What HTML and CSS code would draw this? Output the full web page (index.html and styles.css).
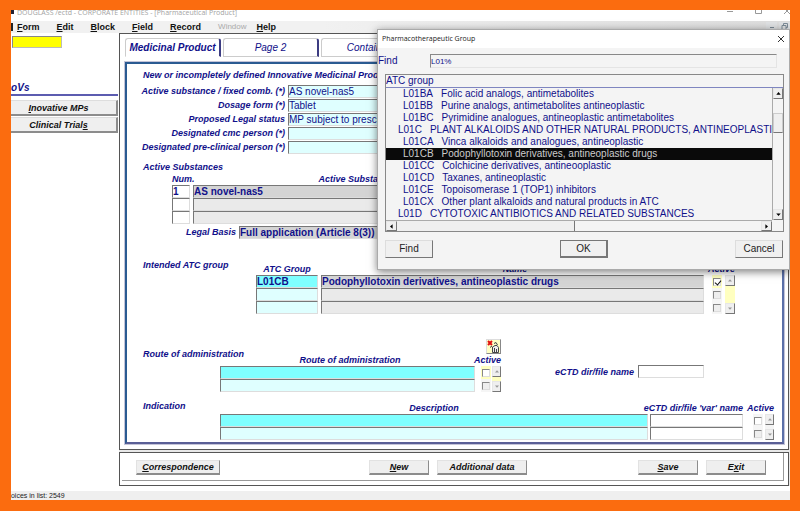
FILE: index.html
```html
<!DOCTYPE html>
<html lang="en">
<head>
  <meta charset="UTF-8">
  <meta name="viewport" content="width=device-width, initial-scale=1.0">
  <title>Pharmaceutical Product</title>
  <link rel="stylesheet" href="styles.css">
</head>
<body>
  <!-- Shared icons -->
  <svg class="sprite" width="0" height="0">
    <symbol id="up" viewBox="0 0 6 4"><path d="M3 0 6 3.5H0Z"/></symbol>
    <symbol id="down" viewBox="0 0 6 4"><path d="M0 .5H6L3 4Z"/></symbol>
    <symbol id="left" viewBox="0 0 4 6"><path d="M0 3 3.5 0V6Z"/></symbol>
    <symbol id="right" viewBox="0 0 4 6"><path d="M.5 0 4 3 .5 6Z"/></symbol>
  </svg>

  <div class="window">
    <header class="title-bar">
      <span class="app-icon"></span>
      <span class="title-text">DOUGLASS /ectd - CORPORATE ENTITIES - [Pharmaceutical Product]</span>
      <svg class="window-controls" width="66" height="11" viewBox="0 0 66 11" fill="none" stroke="#999"><path d="M3 1.5H9M31.500 -3V3.500H37.500V-3M60 4 66-2M60-2 66 4"/></svg>
    </header>

    <nav class="menu-bar">
      <span class="menu-icon"></span>
      <a href="#"><u>F</u>orm</a>
      <a href="#"><u>E</u>dit</a>
      <a href="#"><u>B</u>lock</a>
      <a href="#"><u>F</u>ield</a>
      <a href="#"><u>R</u>ecord</a>
      <a href="#" class="disabled">Window</a>
      <a href="#"><u>H</u>elp</a>
      <svg class="mdi-controls" width="24" height="10" viewBox="0 0 24 10" fill="none" stroke="#7b8a96"><path fill="#dfe1e3" stroke="none" d="M0 0H11V10H0ZM13 0H24V10H13Z"/><path d="M4 5.500H8M16 3.500H20V7.500H16ZM17.500 3V1.500H21.500V5.500H20"/></svg>
    </nav>

    <div class="workspace">
      <aside class="sidebar">
        <input class="quick-search" type="text" aria-label="Quick search">
        <h2>LoVs</h2>
        <button class="side-btn"><u>I</u>novative MPs</button>
        <button class="side-btn">Clinical Trial<u>s</u></button>
      </aside>

      <main class="main">
        <section class="form-frame">
          <div class="tabs">
            <button class="tab active">Medicinal Product</button>
            <button class="tab">Page 2</button>
            <button class="tab">Container</button>
          </div>

          <div class="panel">
            <h1>New or incompletely defined Innovative Medicinal Product</h1>

            <div class="details">
              <label for="substance">Active substance / fixed comb. (*)</label>
              <input id="substance" class="field pale" type="text" value="AS novel-nas5">
              <label for="dosage">Dosage form (*)</label>
              <input id="dosage" class="field pale" type="text" value="Tablet">
              <label for="status">Proposed Legal status</label>
              <input id="status" class="field pale" type="text" value="MP subject to prescription">
              <label for="cmc">Designated cmc person (*)</label>
              <input id="cmc" class="field pale" type="text">
              <label for="preclinical">Designated pre-clinical person (*)</label>
              <input id="preclinical" class="field pale" type="text">
            </div>

            <h2 class="legend">Active Substances</h2>
            <div class="substances">
              <span class="col-head">Num.</span>
              <span class="col-head">Active Substance</span>
              <input class="field strong" type="text" value="1" aria-label="Number 1">
              <input class="field grey strong" type="text" value="AS novel-nas5" aria-label="Active substance 1">
              <input class="field" type="text" aria-label="Number 2">
              <input class="field light" type="text" aria-label="Active substance 2">
              <input class="field" type="text" aria-label="Number 3">
              <input class="field light" type="text" aria-label="Active substance 3">
            </div>
            <div class="legal">
              <label for="legal">Legal Basis</label>
              <input id="legal" class="field grey strong" type="text" value="Full application (Article 8(3))">
            </div>

            <section class="block atc">
              <h2 class="legend">Intended ATC group</h2>
              <div class="atc-grid">
                <span class="col-head">ATC Group</span>
                <span class="col-head">Name</span>
                <span class="col-head active-head">Active</span>
                <input class="field cyan strong" type="text" value="L01CB" aria-label="ATC group 1">
                <input class="field grey strong" type="text" value="Podophyllotoxin derivatives, antineoplastic drugs" aria-label="ATC name 1">
                <span class="tick current"><input type="checkbox" checked aria-label="ATC 1 active"></span>
                <div class="scroller tall yellow">
                  <button aria-label="Up"><svg><use href="#up"/></svg></button>
                  <button aria-label="Down"><svg><use href="#down"/></svg></button>
                </div>
                <input class="field pale" type="text" aria-label="ATC group 2">
                <input class="field light" type="text" aria-label="ATC name 2">
                <span class="tick"><input type="checkbox" aria-label="ATC 2 active"></span>
                <input class="field pale" type="text" aria-label="ATC group 3">
                <input class="field light" type="text" aria-label="ATC name 3">
                <span class="tick"><input type="checkbox" aria-label="ATC 3 active"></span>
              </div>
            </section>

            <section class="block route">
              <h2 class="legend">Route of administration</h2>
              <div class="route-table">
                <button class="icon-btn" aria-label="Remove document">
                  <svg width="13" height="13" viewBox="0 0 13 13"><path fill="none" stroke="#e01010" stroke-width="2" d="M1 1 5 5M5 1 1 5"/><path fill="#eee" stroke="#444" d="M5.500 12.500V7L8 5.500H10L11.500 7.500V12.500Z"/><path stroke="#444" fill="none" d="M7.500 8V12M9.500 9V12M5 6 3 7.500M7 3.500 9 2.500 10.500 5"/></svg>
                </button>
                <div class="route-grid">
                  <span class="col-head">Route of administration</span>
                  <span class="col-head active-head">Active</span>
                  <input class="field cyan" type="text" aria-label="Route 1">
                  <span class="tick current"><input type="checkbox" aria-label="Route 1 active"></span>
                  <div class="scroller yellow">
                    <button aria-label="Up"><svg><use href="#up"/></svg></button>
                    <button aria-label="Down"><svg><use href="#down"/></svg></button>
                  </div>
                  <input class="field pale" type="text" aria-label="Route 2">
                  <span class="tick"><input type="checkbox" aria-label="Route 2 active"></span>
                </div>
              </div>
              <div class="ectd">
                <label for="ectd">eCTD dir/file name</label>
                <input id="ectd" class="field" type="text">
              </div>
            </section>

            <section class="block indication">
              <h2 class="legend">Indication</h2>
              <div class="indication-grid">
                <span class="col-head">Description</span>
                <span class="col-head var-head">eCTD dir/file 'var' name</span>
                <span class="col-head active-head">Active</span>
                <input class="field cyan" type="text" aria-label="Indication 1">
                <input class="field" type="text" aria-label="File name 1">
                <span class="tick"><input type="checkbox" class="enabled" aria-label="Indication 1 active"></span>
                <div class="scroller">
                  <button aria-label="Up"><svg><use href="#up"/></svg></button>
                  <button aria-label="Down"><svg><use href="#down"/></svg></button>
                </div>
                <input class="field pale" type="text" aria-label="Indication 2">
                <input class="field" type="text" aria-label="File name 2">
                <span class="tick"><input type="checkbox" aria-label="Indication 2 active"></span>
              </div>
            </section>
          </div>
        </section>

        <section class="action-frame">
          <div class="actions">
            <button class="action wide"><u>C</u>orrespondence</button>
            <div class="action-group center">
              <button class="action"><u>N</u>ew</button>
              <button class="action wide">Additional data</button>
            </div>
            <div class="action-group">
              <button class="action"><u>S</u>ave</button>
              <button class="action">E<u>x</u>it</button>
            </div>
          </div>
        </section>
      </main>
    </div>

    <footer class="status-bar"><span>Choices in list: 2549</span></footer>

    <!-- List of values popup -->
    <div class="dialog" role="dialog" aria-labelledby="dialog-title">
      <div class="dialog-title">
        <span id="dialog-title">Pharmacotherapeutic Group</span>
        <button class="close" aria-label="Close"><svg width="8" height="8" viewBox="0 0 8 8" stroke="#333"><path d="M1 1 7 7M7 1 1 7"/></svg></button>
      </div>
      <div class="find-row">
        <label for="find">Find</label>
        <input id="find" type="text" value="L01%">
      </div>
      <div class="list">
        <div class="list-head">ATC group</div>
        <div class="list-body">
          <ul role="listbox" aria-label="ATC group">
            <li role="option"><span>L01BA</span>Folic acid analogs, antimetabolites</li>
            <li role="option"><span>L01BB</span>Purine analogs, antimetabolites antineoplastic</li>
            <li role="option"><span>L01BC</span>Pyrimidine analogues, antineoplastic antimetabolites</li>
            <li role="option" class="group"><span>L01C</span>PLANT ALKALOIDS AND OTHER NATURAL PRODUCTS, ANTINEOPLASTIC</li>
            <li role="option"><span>L01CA</span>Vinca alkaloids and analogues, antineoplastic</li>
            <li role="option" class="selected" aria-selected="true"><span>L01CB</span>Podophyllotoxin derivatives, antineoplastic drugs</li>
            <li role="option"><span>L01CC</span>Colchicine derivatives, antineooplastic</li>
            <li role="option"><span>L01CD</span>Taxanes, antineoplastic</li>
            <li role="option"><span>L01CE</span>Topoisomerase 1 (TOP1) inhibitors</li>
            <li role="option"><span>L01CX</span>Other plant alkaloids and natural products in ATC</li>
            <li role="option" class="group"><span>L01D</span>CYTOTOXIC ANTIBIOTICS AND RELATED SUBSTANCES</li>
          </ul>
          <div class="v-scroll">
            <button aria-label="Scroll up"><svg><use href="#up"/></svg></button>
            <div class="track"><div class="thumb"></div></div>
            <button aria-label="Scroll down"><svg><use href="#down"/></svg></button>
          </div>
        </div>
        <div class="h-scroll">
          <button aria-label="Scroll left"><svg><use href="#left"/></svg></button>
          <div class="track"><div class="thumb"></div></div>
          <button aria-label="Scroll right"><svg><use href="#right"/></svg></button>
        </div>
      </div>
      <div class="dialog-actions">
        <button>Find</button>
        <button class="default">OK</button>
        <button>Cancel</button>
      </div>
    </div>
  </div>
</body>
</html>
```

FILE: styles.css
```css
/* General */
* {
  box-sizing: border-box;
}

body {
  margin: 0;
  padding: 10px 10px 11px 11px;
  height: 100vh;
  background: #fb6c0f;
  font-family: "Liberation Sans", Arial, sans-serif;
  font-size: 9px;
  line-height: 12px;
  color: #10108a;
}

h1, h2, ul {
  margin: 0;
  padding: 0;
  font-size: inherit;
}

button, input {
  margin: 0;
  padding: 0;
  font: inherit;
  color: inherit;
  border-radius: 0;
}

.sprite {
  position: absolute;
}

.window {
  position: relative;
  display: flex;
  flex-direction: column;
  height: 100%;
  overflow: hidden;
  background: #fff;
}

/* Title and menu */
.title-bar {
  display: flex;
  gap: 3px;
  height: 11px;
  overflow: hidden;
  color: #a3a3a3;
}

.app-icon {
  width: 3px;
  height: 4px;
  background: #223;
}

.title-text {
  flex: 1;
  margin-top: -3px;
  font-family: "Open Sans", sans-serif;
  font-size: 7px;
}

.menu-bar {
  display: flex;
  align-items: center;
  gap: 17px;
  height: 12px;
  background: linear-gradient(90deg, #f1f1f1 40%, #dcdcdc);
  font-weight: bold;
}

.menu-bar a {
  color: #111;
  text-decoration: none;
}

.menu-bar .disabled {
  margin-right: -7px;
  color: #aaa;
  font-size: 8px;
  font-weight: normal;
}

.menu-icon {
  width: 2px;
  height: 8px;
  margin-right: -13px;
  background: #222;
}

.mdi-controls {
  margin-left: auto;
}

.workspace {
  display: flex;
  flex: 1;
  min-height: 0;
}

/* Sidebar */
.sidebar {
  display: flex;
  flex-direction: column;
  gap: 1px;
  width: 108px;
  padding: 3px 1px 0 0;
}

.quick-search {
  width: 50px;
  height: 12px;
  margin-left: 1px;
  border: 1px solid #bbb;
  border-top-color: #888;
  border-left-color: #888;
  background: #ff0;
}

.sidebar h2 {
  margin: 33px 0 3px -6px;
  border-bottom: 2px solid #5c5cb0;
  font-size: 10px;
  font-style: italic;
  line-height: 12px;
}

.side-btn {
  height: 16px;
  padding-right: 10px;
  border: 1px solid #ddd;
  border-width: 1px 2px 2px 0;
  border-right-color: #8c8c8c;
  border-bottom-color: #8c8c8c;
  background: #efefef;
  color: #111;
  font-weight: bold;
  font-style: italic;
}

/* Main frames */
.main {
  display: flex;
  flex: 1;
  flex-direction: column;
  gap: 2px;
  min-width: 0;
  margin-bottom: 5px;
  padding-right: 1px;
  background: #e8e8e8;
}

.form-frame {
  display: flex;
  flex: 1;
  flex-direction: column;
  padding: 4px 4px 5px 5px;
  border: 1px solid #555;
  background: #fff;
}

.tabs {
  display: flex;
  gap: 2px;
  height: 24px;
  align-items: flex-start;
}

.tab {
  width: 96px;
  height: 19px;
  border: 1px solid #ccc;
  border-right: 2px solid #3c3c82;
  border-radius: 3px 3px 0 0;
  background: #fff;
  font-size: 10px;
  font-style: italic;
}

.tab.active {
  border-bottom-color: #fff;
  font-weight: bold;
}

.panel {
  flex: 1;
  padding: 4px 8px 0 16px;
  border: 2px solid #2b5b92;
  border-right-color: #5a6fa8;
  border-bottom-color: #5a5f96;
  box-shadow: 0 0 0 1px #c4c4d8;
}

.panel h1, .panel .legend, .panel label, .col-head {
  font-weight: bold;
  font-style: italic;
  white-space: nowrap;
}

.panel h1 {
  line-height: 14px;
}

.col-head {
  text-align: center;
}

/* Fields */
.field {
  width: 100%;
  min-width: 0;
  height: 13px;
  border: 1px solid #ddd;
  border-top-color: #777;
  border-left-color: #777;
  background: #fff;
  font-size: 10px;
  line-height: 11px;
}

.field.strong {
  font-weight: bold;
}

.field.pale {
  background: #dfffff;
}

.field.cyan {
  background: #7fffff;
}

.field.grey {
  background: #d4d4d4;
}

.field.light {
  background: #eaeaea;
}

.details {
  display: grid;
  grid-template-columns: 142px 200px;
  column-gap: 3px;
  row-gap: 1px;
  margin-top: 3px;
}

.details label {
  justify-self: end;
}

.panel > .legend {
  margin-top: 7px;
}

.substances {
  display: grid;
  grid-template-columns: 18px 326px;
  column-gap: 3px;
  margin-left: 29px;
}

.legal {
  display: grid;
  grid-template-columns: 93px 280px;
  column-gap: 3px;
  margin-top: 2px;
}

.legal label {
  justify-self: end;
}

/* Blocks with record rows */
.block {
  display: flex;
}

.block > .legend {
  width: 77px;
}

.atc {
  margin-top: 20px;
}

.atc > .legend {
  width: 113px;
}

.atc-grid {
  display: grid;
  flex: 1;
  grid-template-columns: 62px 1fr 10px 10px;
  column-gap: 3px;
  margin-top: 4px;
  padding-right: 39px;
}

.atc-grid .field.grey, .atc-grid .field.light {
  width: calc(100% - 5px);
}

.active-head {
  grid-column: span 2;
  justify-self: end;
}

.route {
  margin-top: 25px;
}

.route > .legend {
  padding-top: 9px;
}

.route-table {
  display: flex;
  flex-direction: column;
  width: 281px;
}

.icon-btn {
  align-self: flex-end;
  width: 15px;
  height: 15px;
  border: 1px solid #ddd;
  border-right-color: #888;
  border-bottom-color: #888;
  background: #ffffc4;
  line-height: 0;
}

.route-grid {
  display: grid;
  grid-template-columns: 1fr 10px 9px;
  column-gap: 1px;
}

.route-grid .field {
  width: calc(100% - 5px);
}

.ectd {
  display: flex;
  align-items: center;
  gap: 4px;
  height: 13px;
  margin: 26px 0 0 54px;
}

.ectd .field {
  width: 66px;
}

.indication {
  margin-top: 8px;
}

.indication-grid {
  display: grid;
  flex: 1;
  grid-template-columns: 1fr 93px 18px 9px;
  column-gap: 2px;
  margin-top: 2px;
}

.indication-grid .tick {
  justify-self: end;
}

.var-head {
  justify-self: end;
}

/* Checkboxes */
.tick {
  display: flex;
  align-items: center;
  justify-content: center;
  width: 10px;
  height: 13px;
  background: #f5f5f5;
}

.tick.current {
  background: #ffffc0;
}

.tick input {
  position: relative;
  width: 8px;
  height: 8px;
  appearance: none;
  border: 1px solid #ddd;
  border-top-color: #888;
  border-left-color: #888;
  background: #eee;
}

.tick.current input, .tick .enabled {
  background: #fff;
}

.tick input:checked::after {
  content: "";
  position: absolute;
  left: 2px;
  top: 0;
  width: 3px;
  height: 5px;
  border: solid #111;
  border-width: 0 1px 1px 0;
  transform: rotate(40deg);
}

/* Scrollers */
.scroller {
  display: flex;
  flex-direction: column;
  justify-content: space-between;
  grid-row: 2 / span 2;
  grid-column: -2;
  background: #f4f4f4;
}

.scroller.tall {
  grid-row: 2 / span 3;
}

.scroller.yellow {
  background: #ffffc0;
}

.scroller button, .v-scroll button, .h-scroll button {
  display: flex;
  align-items: center;
  justify-content: center;
  height: 11px;
  border: 1px solid #e6e6e6;
  border-right-color: #777;
  border-bottom-color: #777;
  background: #efefef;
}

.scroller svg {
  width: 4px;
  height: 3px;
  fill: #999;
}

/* Action buttons */
.action-frame {
  padding: 0 4px 4px 2px;
  border: 1px solid #555;
  background: #fff;
}

.actions {
  display: flex;
  justify-content: space-between;
  padding: 7px 17px 5px 14px;
  border: solid #999;
  border-width: 0 1px 1px 0;
}

.action-group {
  display: flex;
  gap: 8px;
}

.action-group.center {
  padding-left: 38px;
}

.action {
  width: 60px;
  height: 15px;
  border: 1px solid #e2e2e2;
  border-right-color: #8c8c8c;
  border-bottom: 2px solid #8c8c8c;
  background: #efefef;
  color: #111;
  font-weight: bold;
  font-style: italic;
}

.action.wide {
  width: 84px;
}

.action-group .action.wide {
  width: 90px;
}

.status-bar {
  height: 9px;
  background: #efefef;
  color: #222;
  font-size: 7px;
  line-height: 9px;
}

.status-bar span {
  margin-left: -9px;
}

/* Popup */
.dialog {
  position: absolute;
  top: 19px;
  right: 0;
  width: 413px;
  border: 1px solid #aaa;
  background: #f4f4f4;
  box-shadow: 0 2px 8px rgba(0, 0, 0, 0.5);
  font-size: 10px;
}

.dialog-title {
  display: flex;
  align-items: center;
  justify-content: space-between;
  height: 18px;
  padding: 0 4px;
  background: #fff;
  color: #222;
  font-family: "Open Sans", sans-serif;
  font-size: 7px;
}

.close {
  border: 0;
  background: none;
  line-height: 0;
}

.find-row {
  display: flex;
  align-items: center;
  padding: 6px 12px 6px 0;
}

.find-row label {
  width: 52px;
}

.find-row input {
  flex: 1;
  height: 14px;
  border: 1px solid #e4e4e4;
  border-top-color: #888;
  border-left-color: #888;
  background: #f4f4f4;
  font-size: 8px;
}

.list {
  margin: 0 5px 0 7px;
  border: 1px solid #888;
}

.list-head {
  border-bottom: 1px solid #7f86c0;
  line-height: 12px;
}

.list-body {
  display: flex;
}

.list ul {
  flex: 1;
  min-width: 0;
  overflow: hidden;
  list-style: none;
}

.list li {
  padding-left: 17px;
  white-space: nowrap;
}

.list li.group {
  padding-left: 12px;
}

.list li span {
  margin-right: 8px;
}

.list li.selected {
  background: #0a0a0a;
  color: #ccc;
}

.v-scroll {
  display: flex;
  flex-direction: column;
  width: 11px;
  border-left: 1px solid #aaa;
}

.track {
  display: flex;
  flex: 1;
}

.v-scroll .track {
  padding-top: 14px;
}

.v-scroll .thumb {
  width: 100%;
  height: 20px;
  border: 1px solid #ccc;
  border-bottom-color: #777;
  background: #efefef;
}

.v-scroll svg {
  width: 5px;
  height: 3px;
}

.h-scroll {
  display: flex;
  height: 11px;
  margin-right: 11px;
  border-top: 1px solid #aaa;
}

.h-scroll button {
  width: 11px;
  height: 10px;
}

.h-scroll .thumb {
  width: 49%;
  border-right: 1px solid #777;
  background: #efefef;
}

.h-scroll svg {
  width: 3px;
  height: 5px;
}

.dialog-actions {
  display: flex;
  justify-content: space-between;
  padding: 8px 6px 11px 7px;
}

.dialog-actions button {
  width: 48px;
  height: 18px;
  border: 1px solid #ddd;
  border-right-color: #777;
  border-bottom-color: #777;
  background: #f0f0f0;
  color: #222;
}

.dialog-actions .default {
  border: 1px solid #777;
  border-right-width: 2px;
  border-bottom-width: 2px;
}
```
